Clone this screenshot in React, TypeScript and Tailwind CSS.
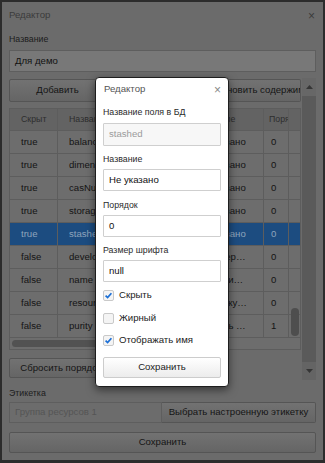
import React from 'react';

type Row = {
  hidden: string;
  field: string;
  title: string;
  order: string;
  selected?: boolean;
};

const rows: Row[] = [
  { hidden: 'true', field: 'balance', title: 'Не указано', order: '0' },
  { hidden: 'true', field: 'dimensions', title: 'Не указано', order: '0' },
  { hidden: 'true', field: 'casNumber', title: 'Не указано', order: '0' },
  { hidden: 'true', field: 'storage', title: 'Не указано', order: '0' },
  { hidden: 'true', field: 'stashed', title: 'Не указано', order: '0', selected: true },
  { hidden: 'false', field: 'developer', title: 'Инженер проекта', order: '0' },
  { hidden: 'false', field: 'name', title: 'Название позиции', order: '0' },
  { hidden: 'false', field: 'resource', title: 'Привязку к группе', order: '0' },
  { hidden: 'false', field: 'purity', title: 'Степень чистоты', order: '1' },
];

const cell = 'flex items-center overflow-hidden whitespace-nowrap border-r border-[#5d5d5d]';
const outerBtn =
  'shrink-0 border border-[#555] bg-gradient-to-b from-[#727272] to-[#656565] text-[#151515] text-[9.6px] whitespace-nowrap overflow-hidden';

function Arrow({ up }: { up?: boolean }) {
  return (
    <svg width="7" height="4" viewBox="0 0 7 4">
      <path d={up ? 'M0 4 L3.5 0 L7 4 Z' : 'M0 0 L3.5 4 L7 0 Z'} fill="#353535" />
    </svg>
  );
}

function Check({ checked, label }: { checked?: boolean; label: string }) {
  return (
    <div className="flex items-center gap-[5px] h-full">
      <div className="w-[11px] h-[11px] rounded-[2px] border border-[#c9c9c9] bg-[#f4f4f4] flex items-center justify-center">
        {checked && (
          <svg width="9" height="9" viewBox="0 0 9 9">
            <path d="M1.6 4.6 L3.6 6.6 L7.4 2.2" stroke="#1b6fd6" strokeWidth="1.7" fill="none" />
          </svg>
        )}
      </div>
      <span className="text-[9.6px] text-[#222]">{label}</span>
    </div>
  );
}

function Field({ label, value, disabled, mt, big }: { label: string; value: string; disabled?: boolean; mt: string; big?: boolean }) {
  return (
    <>
      <div className={`${mt} h-[11px] leading-[11px] text-[8.8px] text-[#2b2b2b]`}>{label}</div>
      <div
        className={`${big ? 'mt-[5px] h-[23px]' : 'mt-[4px] h-[22px]'} border border-[#cfcfcf] rounded-[1px] flex items-center px-[5px] text-[9.6px] ${
          disabled ? 'bg-[#f7f7f7] text-[#9b9b9b]' : 'bg-white text-[#111]'
        }`}
      >
        {value}
      </div>
    </>
  );
}

export default function App() {
  return (
    <div className="relative w-[325px] h-[463px] border-[2px] border-b-[3px] border-[#2c2c2c] bg-[#6b6b6b] font-['Liberation_Sans',Arial,sans-serif] flex flex-col">
      {/* Header */}
      <div className="h-[27px] shrink-0 flex items-center justify-between pl-[7px] pr-[8px]">
        <span className="text-[9.6px] text-[#3b3b3b]">Редактор</span>
        <span className="text-[12px] leading-none text-[#3b3b3b]">×</span>
      </div>

      <div className="px-[7px] flex flex-col">
        <div className="mt-[4px] h-[12px] leading-[12px] text-[8.8px] text-[#1c1c1c]">Название</div>
        <div className="mt-[5px] h-[22px] border border-[#5e5e5e] bg-[#787878] flex items-center px-[5px] text-[9.6px] text-[#111]">
          Для демо
        </div>

        {/* Scroll area */}
        <div className="mt-[6px] h-[302px] shrink-0 flex gap-[1px]">
          <div className="w-[292px] pt-[1px] flex flex-col">
            <div className="h-[23px] shrink-0 flex">
              <button className={`${outerBtn} h-full w-[97px] rounded-l-[2px]`}>Добавить</button>
              <button className={`${outerBtn} h-full w-[98px] border-l-0`}>Удалить</button>
              <button className={`${outerBtn} h-full w-[97px] border-l-0 rounded-r-[2px] px-[10px] text-center`}>
                Обновить содержимое
              </button>
            </div>

            {/* Table */}
            <div className="relative shrink-0 mt-[6px] h-[242px] overflow-hidden border border-[#5d5d5d] bg-[#6d6d6d]">
              <div className="grid grid-cols-[48px_127px_79px_25px_13px] h-[22px] bg-[#636363] text-[8.8px] text-[#2e2e2e] border-b border-[#5d5d5d]">
                <div className={`${cell} px-[11px]`}>Скрыт</div>
                <div className={`${cell} px-[11px]`}>Название поля</div>
                <div className={`${cell} px-[11px]`}>Название</div>
                <div className={`${cell} pl-[5px]`}>Порядок</div>
                <div />
              </div>
              {rows.map((r) => (
                <div
                  key={r.field}
                  className={`grid grid-cols-[48px_127px_79px_25px_13px] h-[23px] border-b border-[#5d5d5d] text-[9.6px] ${
                    r.selected ? 'bg-[#1c4c80] text-[#8ea4bc]' : 'text-[#141414]'
                  }`}
                >
                  <div className={`${cell} px-[11px]`}>{r.hidden}</div>
                  <div className={`${cell} px-[11px]`}>{r.field}</div>
                  <div className={`${cell} pl-[11px] pr-[16px]`}>
                    <span className="truncate">{r.title}</span>
                  </div>
                  <div className={`${cell} pl-[7px]`}>{r.order}</div>
                  <div />
                </div>
              ))}
              <div className="h-[11px] pt-[2px] pl-[2px]">
                <div className="w-[170px] h-[7px] rounded-full bg-[#525252]" />
              </div>
              <div className="absolute left-[281px] top-[199px] w-[8px] h-[28px] rounded-full bg-[#4e4e4e]" />
            </div>

            <button className={`${outerBtn} mt-[8px] h-[20px] w-[104px] rounded-[2px]`}>Сбросить порядок</button>
          </div>

          {/* Outer scrollbar */}
          <div className="w-[14px] h-full flex flex-col bg-[#5a5a5a]">
            <div className="h-[18px] bg-[#676767] flex items-center justify-center">
              <Arrow up />
            </div>
            <div className="flex-1" />
            <div className="h-[18px] bg-[#646464] flex items-center justify-center">
              <Arrow />
            </div>
          </div>
        </div>

        <div className="mt-[7px] h-[12px] leading-[12px] text-[8.8px] text-[#1c1c1c]">Этикетка</div>
        <div className="mt-[3px] h-[21px] shrink-0 flex">
          <div className="w-[153px] h-full border border-[#5e5e5e] bg-[#6c6c6c] flex items-center px-[5px] text-[9.6px] text-[#555]">
            Группа ресурсов 1
          </div>
          <button className={`${outerBtn} h-full flex-1 border-l-0 rounded-r-[2px]`}>Выбрать настроенную этикетку</button>
        </div>
        <button className={`${outerBtn} mt-[9px] h-[21px] w-full rounded-[2px]`}>Сохранить</button>
      </div>

      {/* Inner modal */}
      <div className="absolute left-[93px] top-[75px] w-[134px] bg-white border border-[#1e1e1e] rounded-[4px] shadow-[0_3px_9px_rgba(0,0,0,0.5)] flex flex-col pb-[8px]">
        <div className="h-[23px] flex items-center justify-between pl-[8px] pr-[7px]">
          <span className="text-[9.6px] text-[#555]">Редактор</span>
          <span className="text-[12px] leading-none text-[#888]">×</span>
        </div>
        <div className="px-[7px] flex flex-col">
          <Field label="Название поля в БД" value="stashed" disabled mt="mt-[6px]" big />
          <Field label="Название" value="Не указано" mt="mt-[8px]" />
          <Field label="Порядок" value="0" mt="mt-[9px]" />
          <Field label="Размер шрифта" value="null" mt="mt-[8px]" />
          <div className="mt-[2px] h-[23px]">
            <Check checked label="Скрыть" />
          </div>
          <div className="h-[22px]">
            <Check label="Жирный" />
          </div>
          <div className="h-[22px]">
            <Check checked label="Отображать имя" />
          </div>
          <button className="mt-[6px] h-[21px] border border-[#ccc] rounded-[2px] bg-gradient-to-b from-white to-[#ececec] text-[9.6px] text-[#222]">
            Сохранить
          </button>
        </div>
      </div>
    </div>
  );
}
